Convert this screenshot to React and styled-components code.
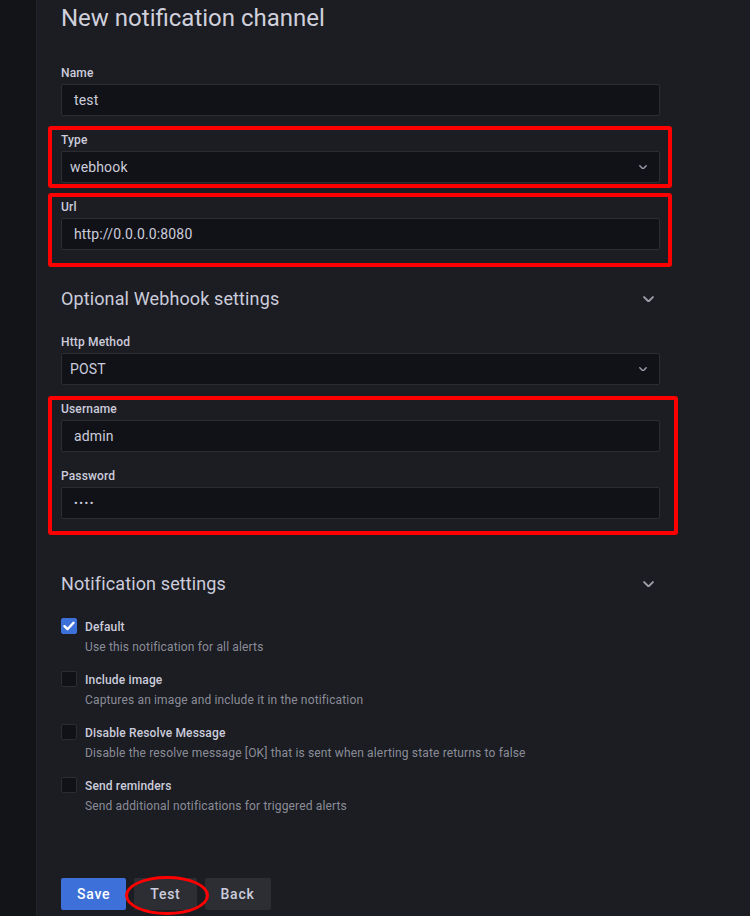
import React from 'react'
import styled, { createGlobalStyle } from 'styled-components'

const GlobalStyle = createGlobalStyle`
  html, body {
    margin: 0;
    padding: 0;
    background: #1b1d22;
    font-family: Roboto, "Liberation Sans", sans-serif;
    color: #ccccdc;
  }
`

const Chevron = ({ size = 10 }) => (
  <svg width={size} height={size * 0.6} viewBox="0 0 10 6" fill="none">
    <path d="M1 1l4 4 4-4" stroke="#9d9daa" strokeWidth="1.8" strokeLinecap="round" strokeLinejoin="round" />
  </svg>
)

const Check = () => (
  <svg width="12" height="10" viewBox="0 0 12 10" fill="none">
    <path d="M1.5 5.2l3 3L10.5 1.8" stroke="#fff" strokeWidth="2.4" strokeLinecap="round" strokeLinejoin="round" />
  </svg>
)

const options = [
  { label: 'Default', desc: 'Use this notification for all alerts', checked: true },
  { label: 'Include image', desc: 'Captures an image and include it in the notification' },
  { label: 'Disable Resolve Message', desc: 'Disable the resolve message [OK] that is sent when alerting state returns to false' },
  { label: 'Send reminders', desc: 'Send additional notifications for triggered alerts' },
]

const App = () => {
  return (
    <>
      <GlobalStyle />
      <Page>
        <Sidebar />
        <Main>
          <Title>New notification channel</Title>

          <Field top={28}>
            <Label>Name</Label>
            <Input>test</Input>
          </Field>

          <Highlight top={10} bottom={1} right={8}>
            <Field>
              <Label>Type</Label>
              <Select>
                webhook
                <Chevron size={8} />
              </Select>
            </Field>
          </Highlight>

          <Highlight top={5} bottom={13} right={8}>
            <Field>
              <Label>Url</Label>
              <Input>http://0.0.0.0:8080</Input>
            </Field>
          </Highlight>

          <SectionHeader top={19}>
            Optional Webhook settings
            <Chevron size={11} />
          </SectionHeader>

          <Field top={23}>
            <Label>Http Method</Label>
            <Select>
              POST
              <Chevron size={8} />
            </Select>
          </Field>

          <Highlight top={11} bottom={12} right={14} pad={0}>
            <Field>
              <Label>Username</Label>
              <Input>admin</Input>
            </Field>
            <Field top={15}>
              <Label>Password</Label>
              <Input dots>••••</Input>
            </Field>
          </Highlight>

          <SectionHeader top={36}>
            Notification settings
            <Chevron size={11} />
          </SectionHeader>

          <Options>
            {options.map((o) => (
              <OptionRow key={o.label}>
                <Box checked={o.checked}>{o.checked && <Check />}</Box>
                <OptionText>
                  <OptionLabel>{o.label}</OptionLabel>
                  <OptionDesc>{o.desc}</OptionDesc>
                </OptionText>
              </OptionRow>
            ))}
          </Options>

          <Buttons>
            <Button primary>Save</Button>
            <CircledWrap>
              <Button>Test</Button>
              <Circle />
            </CircledWrap>
            <Button>Back</Button>
          </Buttons>
        </Main>
      </Page>
    </>
  )
}

export default App

const Page = styled.div`
  display: flex;
  width: 750px;
  height: 916px;
  overflow: hidden;
`

const Sidebar = styled.div`
  width: 36px;
  flex-shrink: 0;
  background: #131418;
  border-right: 1px solid #22242a;
`

const Main = styled.div`
  display: flex;
  flex-direction: column;
  padding: 0 0 0 24px;
  width: 599px;
`

const Title = styled.h1`
  margin: 0;
  padding-top: 1px;
  font-size: 24px;
  font-weight: 400;
  line-height: 35px;
  color: #d0d0dc;
`

const Field = styled.div`
  display: flex;
  flex-direction: column;
  gap: 3px;
  margin-top: ${(p) => p.top || 0}px;
`

const Label = styled.div`
  padding-top: 1px;
  font-size: 12px;
  font-weight: 500;
  line-height: 16px;
  letter-spacing: 0.15px;
  color: #ccccdc;
`

const Input = styled.div`
  box-sizing: border-box;
  height: 32px;
  display: flex;
  align-items: center;
  padding: 0 12px;
  background: #111217;
  border: 1px solid #2c2d33;
  border-radius: 2px;
  font-size: ${(p) => (p.dots ? '11px' : '14px')};
  letter-spacing: ${(p) => (p.dots ? '1.5px' : '0.15px')};
  color: #ccccdc;
`

const Select = styled(Input)`
  justify-content: space-between;
  padding: 0 12px 0 8px;
`

const Highlight = styled.div`
  display: flex;
  flex-direction: column;
  margin: ${(p) => p.top}px -${(p) => p.right + 4}px 0 -13px;
  padding: ${(p) => (p.pad ?? 1)}px ${(p) => p.right}px ${(p) => p.bottom}px 9px;
  border: 4px solid #ff0000;
  border-radius: 3px;
`

const SectionHeader = styled.div`
  display: flex;
  align-items: center;
  justify-content: space-between;
  margin-top: ${(p) => p.top}px;
  padding: 2px 6px 0 0;
  font-size: 18px;
  line-height: 22px;
  letter-spacing: 0.12px;
  color: #ccccdc;
`

const Options = styled.div`
  display: flex;
  flex-direction: column;
  gap: 16px;
  margin-top: 23px;
`

const OptionRow = styled.div`
  display: flex;
  gap: 8px;
`

const Box = styled.div`
  box-sizing: border-box;
  width: 16px;
  height: 16px;
  display: flex;
  align-items: center;
  justify-content: center;
  border-radius: 2px;
  background: ${(p) => (p.checked ? '#3d71d9' : '#111217')};
  border: 1px solid ${(p) => (p.checked ? '#3d71d9' : '#2c2d33')};
`

const OptionText = styled.div`
  display: flex;
  flex-direction: column;
  gap: 4px;
  padding-top: 1px;
`

const OptionLabel = styled.div`
  font-size: 12px;
  font-weight: 500;
  line-height: 16px;
  letter-spacing: 0.15px;
  color: #ccccdc;
`

const OptionDesc = styled.div`
  font-size: 12px;
  line-height: 16px;
  letter-spacing: 0.15px;
  color: rgba(204, 204, 220, 0.65);
`

const Buttons = styled.div`
  display: flex;
  gap: 8px;
  margin-top: 64px;
`

const Button = styled.div`
  box-sizing: border-box;
  height: 32px;
  display: flex;
  align-items: center;
  padding: 0 16px;
  border-radius: 2px;
  font-size: 14px;
  font-weight: 500;
  letter-spacing: 0.75px;
  background: ${(p) => (p.primary ? '#3d71d9' : '#2d2e34')};
  color: ${(p) => (p.primary ? '#ffffff' : '#ccccdc')};
`

const CircledWrap = styled.div`
  position: relative;
`

const Circle = styled.div`
  position: absolute;
  left: -9px;
  right: -12px;
  top: -2px;
  bottom: -5px;
  border: 3px solid #ff0000;
  border-radius: 50%;
  pointer-events: none;
`
